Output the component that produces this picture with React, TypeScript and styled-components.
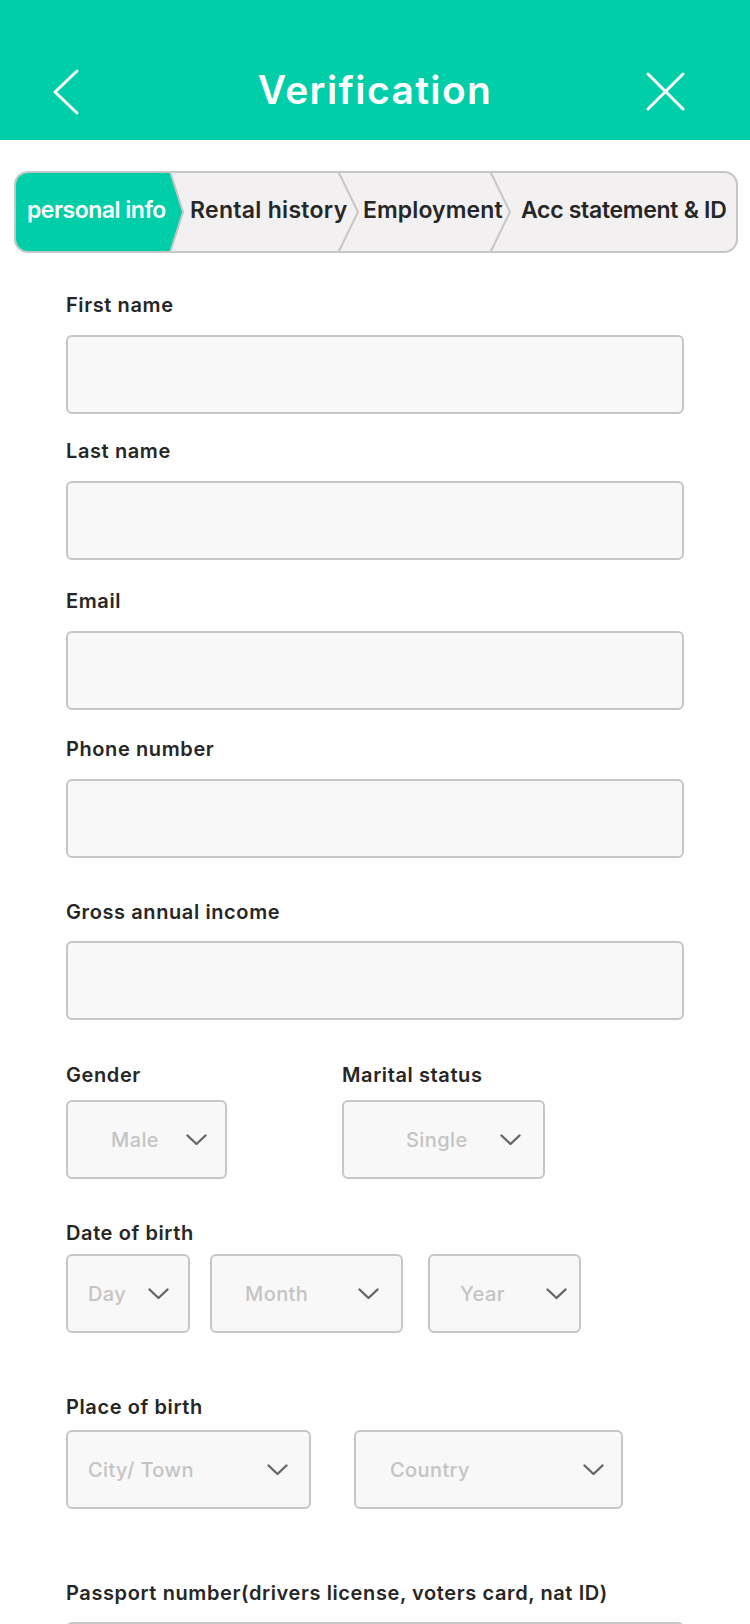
import React from "react";
import styled, { createGlobalStyle } from "styled-components";

const GREEN = "#00CEA8";
const BORDER = "#c6c6c6";

const GlobalStyle = createGlobalStyle`
  html, body { margin: 0; padding: 0; background: #ffffff; }
  body { font-family: Inter, "Noto Sans", "Liberation Sans", sans-serif; color: #262626; }
  * { box-sizing: border-box; }
`;

const Page = styled.div`
  width: 750px;
  min-height: 1624px;
  background: #ffffff;
  padding-bottom: 120px;
`;

const Header = styled.header`
  height: 140px;
  background: ${GREEN};
  padding-top: 44px;
  display: grid;
  grid-template-columns: 1fr auto 1fr;
  align-items: center;
`;

const IconButton = styled.button<{ $side: "left" | "right" }>`
  border: 0;
  background: transparent;
  padding: 0;
  display: flex;
  cursor: pointer;
  justify-self: ${(p) => (p.$side === "left" ? "start" : "end")};
  margin-left: ${(p) => (p.$side === "left" ? "52px" : "0")};
  margin-right: ${(p) => (p.$side === "right" ? "64px" : "0")};
`;

const Title = styled.h1`
  margin: 0 0 4px;
  color: #ffffff;
  font-size: 39px;
  font-weight: 600;
  letter-spacing: 1.4px;
  line-height: 48px;
`;

const TabBar = styled.nav`
  margin: 31px 12px 0 14px;
  height: 82px;
  border: 2px solid ${BORDER};
  border-radius: 14px;
  background: #f2f0f1;
  display: flex;
  overflow: hidden;
`;

const Tab = styled.div<{ $w: number; $pl: number; $ls: number; $active?: boolean }>`
  position: relative;
  flex: none;
  width: ${(p) => p.$w}px;
  padding-left: ${(p) => p.$pl}px;
  padding-bottom: 4px;
  display: flex;
  align-items: center;
  white-space: nowrap;
  font-size: 23px;
  font-weight: 600;
  letter-spacing: ${(p) => p.$ls}px;
  color: ${(p) => (p.$active ? "#ffffff" : "#262626")};
  background: ${(p) => (p.$active ? GREEN : "transparent")};
`;

const TabText = styled.span`
  position: relative;
  z-index: 2;
`;

const Separator = styled.svg`
  position: absolute;
  top: 0;
  left: 100%;
  height: 100%;
  overflow: visible;
  z-index: 1;
`;

const Form = styled.main`
  padding: 0 66px;
  display: flex;
  flex-direction: column;
`;

const Field = styled.div<{ $mt: number }>`
  margin-top: ${(p) => p.$mt}px;
  display: flex;
  flex-direction: column;
`;

const Label = styled.label<{ $gap: number }>`
  display: block;
  font-size: 20px;
  font-weight: 600;
  line-height: 28px;
  color: #262626;
  letter-spacing: 0.6px;
  white-space: nowrap;
  margin-bottom: ${(p) => p.$gap}px;
`;

const TextInput = styled.input`
  width: 100%;
  height: 79px;
  border: 2px solid ${BORDER};
  border-radius: 6px;
  background: #f8f8f8;
  outline: none;
  padding: 0 20px;
  font: inherit;
`;

const Columns = styled.div<{ $gap: number }>`
  display: flex;
  gap: ${(p) => p.$gap}px;
  align-items: flex-start;
`;

const Column = styled.div`
  display: flex;
  flex-direction: column;
`;

const Select = styled.div<{ $w: number; $pl: number; $pr: number; $ml: number }>`
  width: ${(p) => p.$w}px;
  margin-left: ${(p) => p.$ml}px;
  height: 79px;
  border: 2px solid ${BORDER};
  border-radius: 6px;
  background: #f8f8f8;
  padding: 0 ${(p) => p.$pr - 2}px 0 ${(p) => p.$pl - 2}px;
  display: flex;
  align-items: center;
  justify-content: space-between;
  font-size: 20px;
  font-weight: 500;
  letter-spacing: 0.4px;
  color: #c4c4c4;
  white-space: nowrap;
`;

const Chevron = () => (
  <svg width="21" height="12" viewBox="0 0 21 12" fill="none">
    <polyline points="1.5,1.5 10.5,10 19.5,1.5" stroke="#666666" strokeWidth="2.4" strokeLinecap="round" strokeLinejoin="round" />
  </svg>
);

type SelectProps = { label: string; w: number; pl: number; pr: number; ml?: number };
const Dropdown = ({ label, w, pl, pr, ml = 0 }: SelectProps) => (
  <Select $w={w} $pl={pl} $pr={pr} $ml={ml}>
    <span>{label}</span>
    <Chevron />
  </Select>
);

const tabs = [
  { label: "personal info", w: 154, pl: 11, sep: 13, ls: -0.5, active: true },
  { label: "Rental history", w: 168, pl: 20, sep: 20, ls: 0.3 },
  { label: "Employment", w: 152, pl: 25, sep: 20, ls: 0.1 },
  { label: "Acc statement & ID", w: 246, pl: 31, sep: 0, ls: -0.3 },
];

export default function App() {
  return (
    <Page>
      <GlobalStyle />
      <Header>
        <IconButton $side="left" aria-label="Back">
          <svg width="28" height="48" viewBox="0 0 28 48" fill="none">
            <polyline points="25,3 3,24 25,45" stroke="#ffffff" strokeWidth="3" strokeLinecap="round" strokeLinejoin="round" />
          </svg>
        </IconButton>
        <Title>Verification</Title>
        <IconButton $side="right" aria-label="Close">
          <svg width="40" height="40" viewBox="0 0 40 40" fill="none">
            <line x1="2" y1="2" x2="37" y2="37" stroke="#ffffff" strokeWidth="3" strokeLinecap="round" />
            <line x1="37" y1="2" x2="2" y2="37" stroke="#ffffff" strokeWidth="3" strokeLinecap="round" />
          </svg>
        </IconButton>
      </Header>

      <TabBar>
        {tabs.map((t) => (
          <Tab key={t.label} $w={t.w} $pl={t.pl} $ls={t.ls} $active={t.active}>
            <TabText>{t.label}</TabText>
            {t.sep > 0 && (
              <Separator width={t.sep + 2} viewBox={`0 0 ${t.sep + 2} 78`}>
                {t.active && <polygon points={`0,-2 ${t.sep},39 0,80`} fill={GREEN} />}
                <polyline
                  points={`0,-2 ${t.sep},39 0,80`}
                  fill="none"
                  stroke={BORDER}
                  strokeWidth="2"
                  strokeLinejoin="round"
                />
              </Separator>
            )}
          </Tab>
        ))}
      </TabBar>

      <Form>
        <Field $mt={38}>
          <Label $gap={16}>First name</Label>
          <TextInput />
        </Field>
        <Field $mt={23}>
          <Label $gap={16}>Last name</Label>
          <TextInput />
        </Field>
        <Field $mt={27}>
          <Label $gap={16}>Email</Label>
          <TextInput />
        </Field>
        <Field $mt={25}>
          <Label $gap={16}>Phone number</Label>
          <TextInput />
        </Field>
        <Field $mt={40}>
          <Label $gap={15}>Gross annual income</Label>
          <TextInput />
        </Field>

        <Field $mt={41}>
          <Columns $gap={115}>
            <Column>
              <Label $gap={11}>Gender</Label>
              <Dropdown label="Male" w={161} pl={45} pr={20} />
            </Column>
            <Column>
              <Label $gap={11}>Marital status</Label>
              <Dropdown label="Single" w={203} pl={64} pr={24} />
            </Column>
          </Columns>
        </Field>

        <Field $mt={40}>
          <Label $gap={7}>Date of birth</Label>
          <Columns $gap={20}>
            <Dropdown label="Day" w={124} pl={22} pr={21} />
            <Dropdown label="Month" w={193} pl={35} pr={24} />
            <Dropdown label="Year" w={153} pl={32} pr={14} ml={5} />
          </Columns>
        </Field>

        <Field $mt={60}>
          <Label $gap={9}>Place of birth</Label>
          <Columns $gap={43}>
            <Dropdown label="City/ Town" w={245} pl={22} pr={23} />
            <Dropdown label="Country" w={269} pl={36} pr={19} />
          </Columns>
        </Field>

        <Field $mt={70}>
          <Label $gap={15}>Passport number(drivers license, voters card, nat ID)</Label>
          <TextInput />
        </Field>
      </Form>
    </Page>
  );
}
